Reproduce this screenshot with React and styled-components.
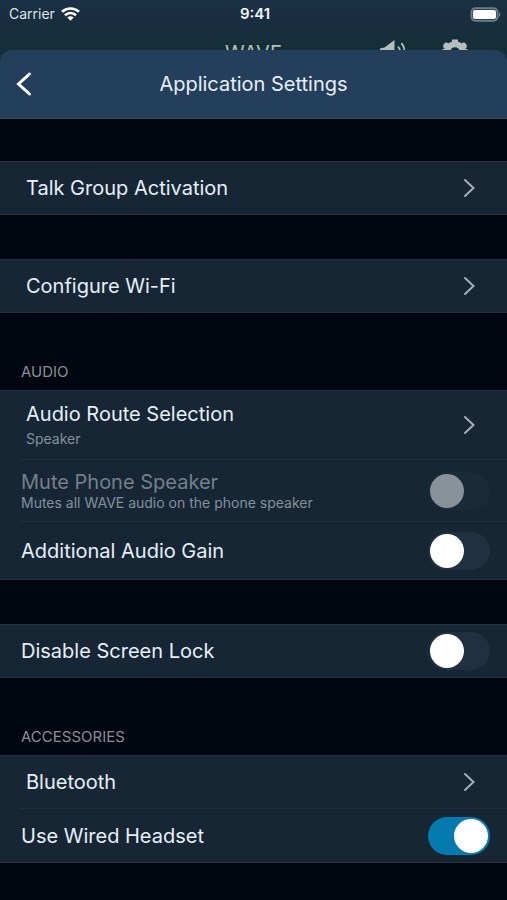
import React, {useState} from 'react'
import styled, {createGlobalStyle} from 'styled-components'


const GlobalStyle = createGlobalStyle`
    *{
        box-sizing: border-box;
    }

    body{
        margin: 0;
        background-color: #00060f;
        color: #e6eff8;
        font-family: Inter, "Liberation Sans", sans-serif;
    }
`

const Page = styled.div`
    min-height: 100vh;
    display: flex;
    flex-direction: column;
    background-color: #00060f;
`

const Backdrop = styled.div`
    height: 66px;
    overflow: hidden;
    background: linear-gradient(#1a3044, #182e3e 28px, #142f37 50px);
`

const StatusBar = styled.div`
    height: 28px;
    padding: 0 6px 0 9px;
    display: grid;
    grid-template-columns: 1fr auto 1fr;
    align-items: center;
    font-size: 14px;
    line-height: 28px;
    color: #dde4ea;
`

const StatusSide = styled.div`
    display: flex;
    align-items: center;
    gap: 6px;
    justify-content: ${({$end}) => ($end ? 'flex-end' : 'flex-start')};
`

const Clock = styled.span`
    font-size: 15px;
    font-weight: 600;
    color: #f2f5f8;
`

const MainBar = styled.div`
    height: 50px;
    padding: 0 38px 0 9px;
    display: grid;
    grid-template-columns: 1fr auto 1fr;
    align-items: center;
    color: #b6bebd;
`

const MainTitle = styled.span`
    grid-column: 2;
    padding-left: 29px;
    font-size: 20px;
    line-height: 24px;
`

const MainIcons = styled.div`
    display: flex;
    justify-content: flex-end;
    gap: 36px;
`

const Sheet = styled.main`
    flex: 1;
    margin-top: -16px;
`

const Header = styled.header`
    height: 69px;
    padding: 0 12px;
    position: relative;
    display: grid;
    grid-template-columns: 1fr auto 1fr;
    align-items: center;
    background-color: #233f5b;
    border-bottom: 1px solid #3b4a57;
    border-radius: 12px 12px 0 0;
`

const BackButton = styled.button`
    justify-self: start;
    display: flex;
    padding: 0;
    background: none;
    border: none;
    color: #fff;
    cursor: pointer;
`

const Title = styled.h1`
    margin: 0;
    font-size: 20px;
    line-height: 24px;
    font-weight: 400;
`

const Content = styled.div`
    padding: 42px 0 36px;
    display: flex;
    flex-direction: column;
`

const Group = styled.section`
    & + &{
        margin-top: 44px;
    }
`

const GroupTitle = styled.h2`
    margin: 0;
    padding: 4px 21px 8px;
    font-size: 15px;
    line-height: 21px;
    font-weight: 400;
    color: #8a8f97;
`

const Rows = styled.div`
    background-color: #162635;
    border-top: 1px solid #22323f;
    border-bottom: 1px solid #22323f;
`

const Row = styled.div`
    margin-left: 20px;

    & + &{
        border-top: 1px solid #203040;
    }
`

const LinkRow = styled.button`
    width: 100%;
    min-height: ${({$tall}) => ($tall ? 68 : 52)}px;
    padding: 0 32px 0 6px;
    display: flex;
    align-items: center;
    justify-content: space-between;
    background: none;
    border: none;
    color: inherit;
    font: inherit;
    text-align: left;
    cursor: pointer;
`

const ToggleRow = styled.label`
    min-height: ${({$size}) => $size}px;
    padding: 0 17px 0 1px;
    display: flex;
    align-items: center;
    justify-content: space-between;
    cursor: pointer;
`

const Texts = styled.span`
    display: flex;
    flex-direction: column;
    gap: ${({$gap}) => $gap || 0}px;
`

const Name = styled.span`
    font-size: 20px;
    line-height: 24px;
    color: ${({$dim}) => ($dim ? '#75808b' : '#e6eff8')};
`

const Detail = styled.span`
    font-size: 14px;
    line-height: 18px;
    color: #84909c;
`

const Switch = styled.input`
    appearance: none;
    flex: none;
    width: 62px;
    height: 38px;
    margin: 0;
    padding: 2px;
    display: flex;
    border-radius: 19px;
    background-color: #203040;
    cursor: pointer;

    &::before{
        content: '';
        width: 34px;
        height: 34px;
        border-radius: 50%;
        background-color: #fff;
    }

    &:checked{
        justify-content: flex-end;
        background-color: #057aae;
    }

    &:disabled{
        background-color: #1a2a39;
    }

    &:disabled::before{
        background-color: #88929b;
    }
`

const WifiIcon = () => (
    <svg width="19" height="14" viewBox="0 0 19 14" fill="none" stroke="#fff" strokeWidth="2.6" aria-hidden="true">
        <path d="M1 4.800a12.400 12.400 0 0 1 17 0" />
        <path d="M4 8.200a8 8 0 0 1 11 0" />
        <path d="M9.500 13.700L6.400 10.600a4.500 4.500 0 0 1 6.200 0z" fill="#fff" stroke="none" />
    </svg>
)

const BatteryIcon = () => (
    <svg width="31" height="15" viewBox="0 0 31 15" aria-hidden="true">
        <rect x="1.500" y="1.200" width="26" height="12.600" rx="4" fill="none" stroke="#6e7c87" strokeWidth="2" />
        <rect x="3" y="3" width="23" height="9" rx="2" fill="#fff" />
        <path d="M29 5.200c1.900.6 1.900 4 0 4.600z" fill="#6e7c87" />
    </svg>
)

const SpeakerIcon = () => (
    <svg width="28" height="30" viewBox="0 0 28 30" fill="none" stroke="currentColor" strokeWidth="1.8" aria-hidden="true">
        <path d="M3 10.500L7.500 9.500L17.500 2v24l-10-7.500H3z" fill="currentColor" stroke="none" />
        <path d="M21 8.500q4.500 5.500 0 11" />
        <path d="M24.500 5q6.500 9 0 18" />
    </svg>
)

const GearIcon = () => (
    <svg width="28" height="30" viewBox="0 0 28 30" fill="none" stroke="currentColor" aria-hidden="true">
        <circle cx="14" cy="14" r="7.800" strokeWidth="6" />
        <path d="M14 1.500v3M14 23.500v3M1.500 14h3M23.500 14h3" strokeWidth="6" strokeLinejoin="round" />
        <path d="M5.500 8l1.500 1.200M22.500 8l-1.500 1.200M5.500 20l1.500-1.200M22.500 20l-1.500-1.200" strokeWidth="6.500" strokeLinecap="round" />
    </svg>
)

const BackIcon = () => (
    <svg width="24" height="26" viewBox="0 0 24 26" fill="none" stroke="currentColor" strokeWidth="3" strokeLinecap="round" aria-hidden="true">
        <path d="M17.500 3L6.500 13l11 10" />
    </svg>
)

const Chevron = () => (
    <svg width="12" height="20" viewBox="0 0 12 20" fill="none" stroke="#a3afb9" strokeWidth="2" strokeLinecap="round" aria-hidden="true">
        <path d="M2 2l8.500 8L2 18" />
    </svg>
)

const LinkItem = ({name, detail}) => (
    <Row>
        <LinkRow type="button" $tall={!!detail}>
            <Texts $gap={4}>
                <Name>{name}</Name>
                {detail && <Detail>{detail}</Detail>}
            </Texts>
            <Chevron />
        </LinkRow>
    </Row>
)

const ToggleItem = ({id, name, detail, size = 52, disabled, checked, onChange}) => (
    <Row>
        <ToggleRow htmlFor={id} $size={size}>
            <Texts>
                <Name $dim={disabled}>{name}</Name>
                {detail && <Detail>{detail}</Detail>}
            </Texts>
            <Switch
            type="checkbox"
            role="switch"
            id={id}
            name={id}
            disabled={disabled}
            checked={checked}
            onChange={onChange}
            />
        </ToggleRow>
    </Row>
)

const App = () => {

    const [values, setValues] = useState({
        mute: false,
        gain: false,
        screenLock: false,
        headset: true
    })

    const handleChange = (e) => {
        const {name, checked} = e.target
        setValues({...values, [name]: checked})
    }

    return(
        <>
            <GlobalStyle />
            <Page>
                <Backdrop>
                    <StatusBar>
                        <StatusSide>
                            <span>Carrier</span>
                            <WifiIcon />
                        </StatusSide>
                        <Clock>9:41</Clock>
                        <StatusSide $end>
                            <BatteryIcon />
                        </StatusSide>
                    </StatusBar>
                    <MainBar>
                        <MainTitle>WAVE</MainTitle>
                        <MainIcons>
                            <SpeakerIcon />
                            <GearIcon />
                        </MainIcons>
                    </MainBar>
                </Backdrop>

                <Sheet>
                    <Header>
                        <BackButton type="button" aria-label="Back">
                            <BackIcon />
                        </BackButton>
                        <Title>Application Settings</Title>
                    </Header>

                    <Content>
                        <Group>
                            <Rows>
                                <LinkItem name="Talk Group Activation" />
                            </Rows>
                        </Group>

                        <Group>
                            <Rows>
                                <LinkItem name="Configure Wi-Fi" />
                            </Rows>
                        </Group>

                        <Group>
                            <GroupTitle>AUDIO</GroupTitle>
                            <Rows>
                                <LinkItem name="Audio Route Selection" detail="Speaker" />
                                <ToggleItem
                                id="mute"
                                name="Mute Phone Speaker"
                                detail="Mutes all WAVE audio on the phone speaker"
                                size={61}
                                disabled
                                checked={values.mute}
                                onChange={handleChange}
                                />
                                <ToggleItem
                                id="gain"
                                name="Additional Audio Gain"
                                size={57}
                                checked={values.gain}
                                onChange={handleChange}
                                />
                            </Rows>
                        </Group>

                        <Group>
                            <Rows>
                                <ToggleItem
                                id="screenLock"
                                name="Disable Screen Lock"
                                checked={values.screenLock}
                                onChange={handleChange}
                                />
                            </Rows>
                        </Group>

                        <Group>
                            <GroupTitle>ACCESSORIES</GroupTitle>
                            <Rows>
                                <LinkItem name="Bluetooth" />
                                <ToggleItem
                                id="headset"
                                name="Use Wired Headset"
                                size={53}
                                checked={values.headset}
                                onChange={handleChange}
                                />
                            </Rows>
                        </Group>
                    </Content>
                </Sheet>
            </Page>
        </>
    )
}

export default App
